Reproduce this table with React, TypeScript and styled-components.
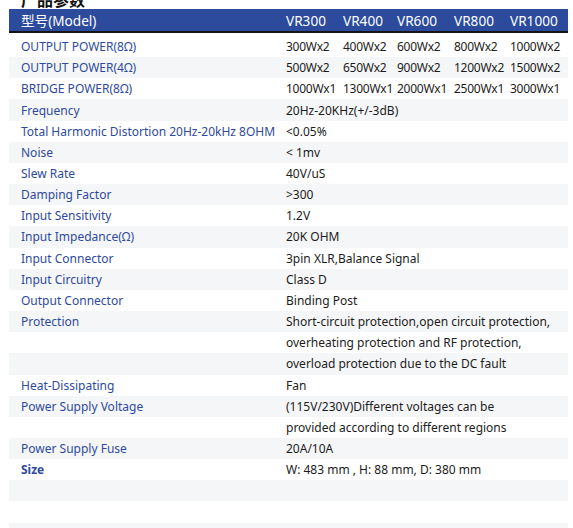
import React from "react";
import styled, { createGlobalStyle } from "styled-components";

const GlobalStyle = createGlobalStyle`
  html, body { margin: 0; padding: 0; background: #ffffff; }
  body {
    font-family: "Noto Sans", "Noto Sans CJK SC", sans-serif;
    -webkit-font-smoothing: antialiased;
  }
`;

const Page = styled.div`
  width: 573px;
  height: 528px;
  overflow: hidden;
  padding-left: 9px;
  box-sizing: border-box;
`;

const Title = styled.div`
  margin-top: -11px;
  height: 20px;
  padding-left: 12px;
  font-family: "Noto Sans CJK SC", sans-serif;
  font-size: 16px;
  line-height: 20px;
  font-weight: 700;
  color: #111;
`;

const Table = styled.div`
  width: 559px;
  display: flex;
  flex-direction: column;
`;

const cols = "274px 57px 54px 57px 56px 1fr";

const HeaderRow = styled.div`
  display: grid;
  grid-template-columns: ${cols};
  height: 22px;
  align-items: center;
  background: #2c4b9c;
  color: #ffffff;
  font-size: 13.6px;
  border-bottom: 2px solid #151515;
  margin-bottom: 3px;
`;

const HeadCell = styled.div<{ $first?: boolean }>`
  padding-left: ${(p) => (p.$first ? "12px" : "3px")};
  white-space: nowrap;
`;

const Row = styled.div<{ $stripe: boolean }>`
  display: grid;
  grid-template-columns: ${cols};
  height: 21.17px;
  align-items: center;
  background: ${(p) => (p.$stripe ? "#f5f6f8" : "#ffffff")};
  font-size: 12px;
`;

const Label = styled.div<{ $bold?: boolean }>`
  padding-left: 12px;
  color: #2e4a9e;
  font-weight: ${(p) => (p.$bold ? 700 : 400)};
  white-space: nowrap;
`;

const Value = styled.div<{ $span?: boolean }>`
  padding-left: 3px;
  color: #1c1c1c;
  white-space: nowrap;
  letter-spacing: ${(p) => (p.$span ? "0" : "-0.25px")};
  grid-column: ${(p) => (p.$span ? "2 / -1" : "auto")};
`;

type RowData = { label?: string; bold?: boolean; values?: string[]; text?: string };

const rows: RowData[] = [
  { label: "OUTPUT POWER(8Ω)", values: ["300Wx2", "400Wx2", "600Wx2", "800Wx2", "1000Wx2"] },
  { label: "OUTPUT POWER(4Ω)", values: ["500Wx2", "650Wx2", "900Wx2", "1200Wx2", "1500Wx2"] },
  { label: "BRIDGE POWER(8Ω)", values: ["1000Wx1", "1300Wx1", "2000Wx1", "2500Wx1", "3000Wx1"] },
  { label: "Frequency", text: "20Hz-20KHz(+/-3dB)" },
  { label: "Total Harmonic Distortion 20Hz-20kHz 8OHM", text: "<0.05%" },
  { label: "Noise", text: " < 1mv" },
  { label: "Slew Rate", text: "40V/uS" },
  { label: "Damping Factor", text: ">300" },
  { label: "Input Sensitivity", text: "1.2V" },
  { label: "Input Impedance(Ω)", text: "20K OHM" },
  { label: "Input Connector", text: "3pin XLR,Balance Signal" },
  { label: "Input Circuitry", text: "Class D" },
  { label: "Output Connector", text: "Binding Post" },
  { label: "Protection", text: "Short-circuit protection,open circuit protection," },
  { text: "overheating protection and RF protection," },
  { text: "overload protection due to the DC fault" },
  { label: "Heat-Dissipating", text: "Fan" },
  { label: "Power Supply Voltage", text: "(115V/230V)Different voltages can be" },
  { text: "provided according to different regions" },
  { label: "Power Supply Fuse", text: "20A/10A" },
  { label: "Size", bold: true, text: "W: 483 mm , H: 88 mm, D: 380 mm" },
  {},
  {},
  {},
];

export default function App() {
  return (
    <>
      <GlobalStyle />
      <Page>
        <Title>产品参数</Title>
        <Table>
          <HeaderRow>
            <HeadCell $first>型号(Model)</HeadCell>
            <HeadCell>VR300</HeadCell>
            <HeadCell>VR400</HeadCell>
            <HeadCell>VR600</HeadCell>
            <HeadCell>VR800</HeadCell>
            <HeadCell>VR1000</HeadCell>
          </HeaderRow>
          {rows.map((r, i) => (
            <Row key={i} $stripe={i % 2 === 1}>
              <Label $bold={r.bold}>{r.label ?? ""}</Label>
              {r.values ? (
                r.values.map((v, j) => <Value key={j}>{v}</Value>)
              ) : (
                <Value $span>{r.text ?? ""}</Value>
              )}
            </Row>
          ))}
        </Table>
      </Page>
    </>
  );
}
